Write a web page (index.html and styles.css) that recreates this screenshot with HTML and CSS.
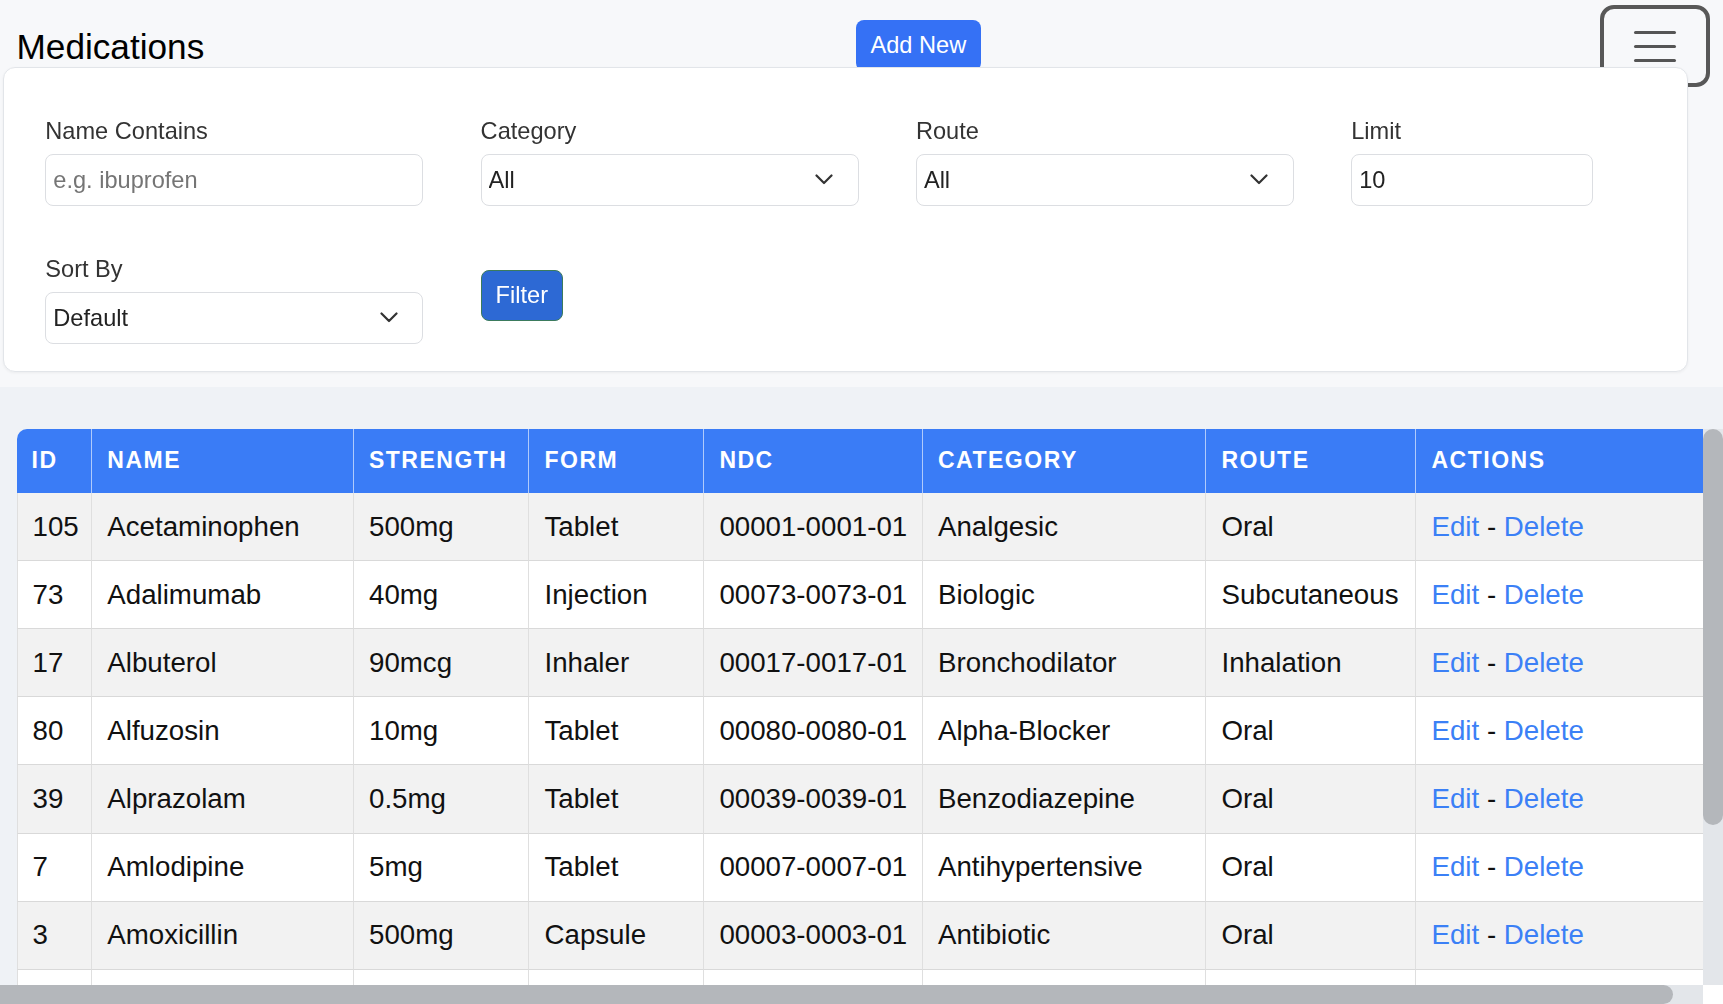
FILE: index.html
```html
<!DOCTYPE html>
<html lang="en">
<head>
<meta charset="utf-8">
<title>Medications</title>
<link rel="stylesheet" href="styles.css">
</head>
<body>
<div class="top">
  <header class="page-header">
    <h1 class="title">Medications</h1>
    <button class="btn btn-add" type="button">Add New</button>
  </header>
  <button class="menu-toggle" type="button" aria-label="Menu">
    <span class="bar"></span><span class="bar"></span><span class="bar"></span>
  </button>
  <form class="filter-card">
    <div class="field">
      <label class="field-label" for="f-name">Name Contains</label>
      <input class="control" id="f-name" type="text" placeholder="e.g. ibuprofen">
    </div>
    <div class="field">
      <label class="field-label" for="f-cat">Category</label>
      <div class="select-wrap">
        <select class="control select" id="f-cat"><option>All</option></select>
        <svg class="chevron" width="18" height="11" viewBox="0 0 18 11"><path d="M1.5 1.5l7.5 7.5 7.5-7.5"/></svg>
      </div>
    </div>
    <div class="field">
      <label class="field-label" for="f-route">Route</label>
      <div class="select-wrap">
        <select class="control select" id="f-route"><option>All</option></select>
        <svg class="chevron" width="18" height="11" viewBox="0 0 18 11"><path d="M1.5 1.5l7.5 7.5 7.5-7.5"/></svg>
      </div>
    </div>
    <div class="field">
      <label class="field-label" for="f-limit">Limit</label>
      <input class="control control-limit" id="f-limit" type="text" value="10">
    </div>
    <div class="field">
      <label class="field-label" for="f-sort">Sort By</label>
      <div class="select-wrap">
        <select class="control select" id="f-sort"><option>Default</option></select>
        <svg class="chevron" width="18" height="11" viewBox="0 0 18 11"><path d="M1.5 1.5l7.5 7.5 7.5-7.5"/></svg>
      </div>
    </div>
    <div class="field field-action">
      <button class="btn btn-filter" type="button">Filter</button>
    </div>
  </form>
</div>
<main class="table-section">
  <div class="table-wrap">
    <div class="table-viewport">
      <table class="med-table">
        <thead>
          <tr>
            <th class="c-id">Id</th>
            <th class="c-name">Name</th>
            <th class="c-strength">Strength</th>
            <th class="c-form">Form</th>
            <th class="c-ndc">NDC</th>
            <th class="c-cat">Category</th>
            <th class="c-route">Route</th>
            <th class="c-actions">Actions</th>
          </tr>
        </thead>
        <tbody>
          <tr><td>105</td><td>Acetaminophen</td><td>500mg</td><td>Tablet</td><td>00001-0001-01</td><td>Analgesic</td><td>Oral</td><td><a class="act" href="#">Edit</a> - <a class="act" href="#">Delete</a></td></tr>
          <tr><td>73</td><td>Adalimumab</td><td>40mg</td><td>Injection</td><td>00073-0073-01</td><td>Biologic</td><td>Subcutaneous</td><td><a class="act" href="#">Edit</a> - <a class="act" href="#">Delete</a></td></tr>
          <tr><td>17</td><td>Albuterol</td><td>90mcg</td><td>Inhaler</td><td>00017-0017-01</td><td>Bronchodilator</td><td>Inhalation</td><td><a class="act" href="#">Edit</a> - <a class="act" href="#">Delete</a></td></tr>
          <tr><td>80</td><td>Alfuzosin</td><td>10mg</td><td>Tablet</td><td>00080-0080-01</td><td>Alpha-Blocker</td><td>Oral</td><td><a class="act" href="#">Edit</a> - <a class="act" href="#">Delete</a></td></tr>
          <tr><td>39</td><td>Alprazolam</td><td>0.5mg</td><td>Tablet</td><td>00039-0039-01</td><td>Benzodiazepine</td><td>Oral</td><td><a class="act" href="#">Edit</a> - <a class="act" href="#">Delete</a></td></tr>
          <tr><td>7</td><td>Amlodipine</td><td>5mg</td><td>Tablet</td><td>00007-0007-01</td><td>Antihypertensive</td><td>Oral</td><td><a class="act" href="#">Edit</a> - <a class="act" href="#">Delete</a></td></tr>
          <tr><td>3</td><td>Amoxicillin</td><td>500mg</td><td>Capsule</td><td>00003-0003-01</td><td>Antibiotic</td><td>Oral</td><td><a class="act" href="#">Edit</a> - <a class="act" href="#">Delete</a></td></tr>
          <tr class="row-empty"><td></td><td></td><td></td><td></td><td></td><td></td><td></td><td></td></tr>
        </tbody>
      </table>
    </div>
    <div class="vscroll"><div class="vthumb"></div></div>
    <div class="hscroll"><div class="hthumb"></div></div>
    <div class="scroll-corner"></div>
  </div>
</main>
</body>
</html>
```

FILE: styles.css
```css
html, body {
  margin: 0;
  height: 100%;
}

body {
  overflow: hidden;
  background: #eff2f6;
  font-family: "Liberation Sans", Arial, sans-serif;
  color: #111;
}

.top {
  background: #f7f8fa;
  padding-bottom: 15.3px;
}

.page-header {
  display: flex;
  align-items: flex-start;
  height: 67px;
  padding-left: 16.5px;
}

.title {
  flex: none;
  width: 839px;
  margin: 26.6px 0 0;
  font-size: 35.2px;
  font-weight: 400;
  line-height: normal;
  color: #000;
}

.btn {
  font-family: "Liberation Sans", Arial, sans-serif;
  font-size: 23.6px;
  color: #fff;
  border-radius: 8px;
  cursor: pointer;
  box-sizing: border-box;
  height: 50.7px;
  padding: 0 15px;
}

.btn-add {
  margin-top: 20px;
  background: #3571f5;
  border: none;
}

.menu-toggle {
  position: fixed;
  top: 5px;
  left: 1600px;
  z-index: 1;
  width: 110px;
  height: 82px;
  box-sizing: border-box;
  border: 4px solid #585858;
  border-radius: 14px;
  background: transparent;
  padding: 0;
  display: flex;
  flex-direction: column;
  align-items: center;
  justify-content: center;
  gap: 11px;
}

.bar {
  display: block;
  width: 42px;
  height: 3px;
  border-radius: 2px;
  background: #555;
}

.filter-card {
  position: relative;
  z-index: 2;
  margin: 0 0 0 3px;
  width: 1685px;
  box-sizing: border-box;
  background: #fff;
  border: 1px solid #e2e5e9;
  border-radius: 12px;
  box-shadow: 0 1px 3px rgba(0, 0, 0, 0.05);
  padding: 50px 42px 27px 41.3px;
  display: grid;
  grid-template-columns: 378px 378px 378px 1fr;
  column-gap: 57.3px;
  row-gap: 50.1px;
}

.field-label {
  display: block;
  font-size: 23.6px;
  line-height: 27px;
  color: #333;
  margin-bottom: 9.4px;
}

.control {
  display: block;
  width: 100%;
  height: 51.4px;
  box-sizing: border-box;
  border: 1px solid #dcdee2;
  border-radius: 8px;
  padding: 0 7px;
  font-family: "Liberation Sans", Arial, sans-serif;
  font-size: 23.6px;
  color: #222;
  background: #fff;
  outline: none;
}

.control::placeholder {
  color: #757575;
}

.control-limit {
  width: 242px;
}

.select-wrap {
  position: relative;
}

.select {
  appearance: none;
  -webkit-appearance: none;
  padding-right: 50px;
}

.chevron {
  position: absolute;
  right: 25.5px;
  top: 20px;
  pointer-events: none;
}

.chevron path {
  fill: none;
  stroke: #333;
  stroke-width: 2.2;
  stroke-linecap: round;
  stroke-linejoin: round;
}

.field-action {
  align-self: start;
}

.btn-filter {
  margin-top: 14px;
  padding: 0 14px;
  background: #2d69d4;
  border: 1px solid #3b7b5d;
}

.table-section {
  padding-top: 42px;
}

.table-wrap {
  height: 575px;
  display: grid;
  grid-template-columns: 1703px 20px;
  grid-template-rows: 556px 19px;
}

.table-viewport {
  overflow: hidden;
  padding-left: 16.5px;
}

.vscroll {
  background: #e3e6ea;
}

.vthumb {
  height: 396px;
  background: #b4b7bb;
  border-radius: 10px;
}

.hscroll {
  background: #e3e6ea;
}

.hthumb {
  width: 1673px;
  height: 100%;
  background: #b4b7bb;
  border-radius: 0 10px 10px 0;
}

.scroll-corner {
  background: #fff;
}

.med-table {
  width: 1717px;
  table-layout: fixed;
  border-collapse: separate;
  border-spacing: 0;
}

.med-table th,
.med-table td {
  box-sizing: border-box;
  padding: 0 15px;
  text-align: left;
  vertical-align: middle;
  white-space: nowrap;
}

.med-table thead tr {
  height: 64px;
}

.med-table th {
  background: #3a7cf6;
  color: #fff;
  font-size: 23px;
  font-weight: 700;
  letter-spacing: 1.5px;
  text-transform: uppercase;
  border-right: 1px solid rgba(255, 255, 255, 0.6);
}

.med-table th:first-child {
  border-top-left-radius: 10px;
}

.med-table th:last-child {
  border-top-right-radius: 10px;
  border-right: none;
}

.c-id { width: 75.8px; }
.c-name { width: 261.7px; }
.c-strength { width: 175.5px; }
.c-form { width: 174.9px; }
.c-ndc { width: 218.6px; }
.c-cat { width: 283.5px; }
.c-route { width: 210px; }
.c-actions { width: 317px; }

.med-table tbody tr {
  height: 68.13px;
}

.med-table td {
  font-size: 27.7px;
  color: #111;
  border-right: 1px solid #dfdfdf;
  border-bottom: 1px solid #d9d9d9;
  background: #fff;
}

.med-table td:first-child {
  border-left: 1px solid #dfdfdf;
}

.med-table tbody tr:nth-child(odd) td {
  background: #f2f2f2;
}

.act {
  color: #3b80f6;
  text-decoration: none;
}
```
